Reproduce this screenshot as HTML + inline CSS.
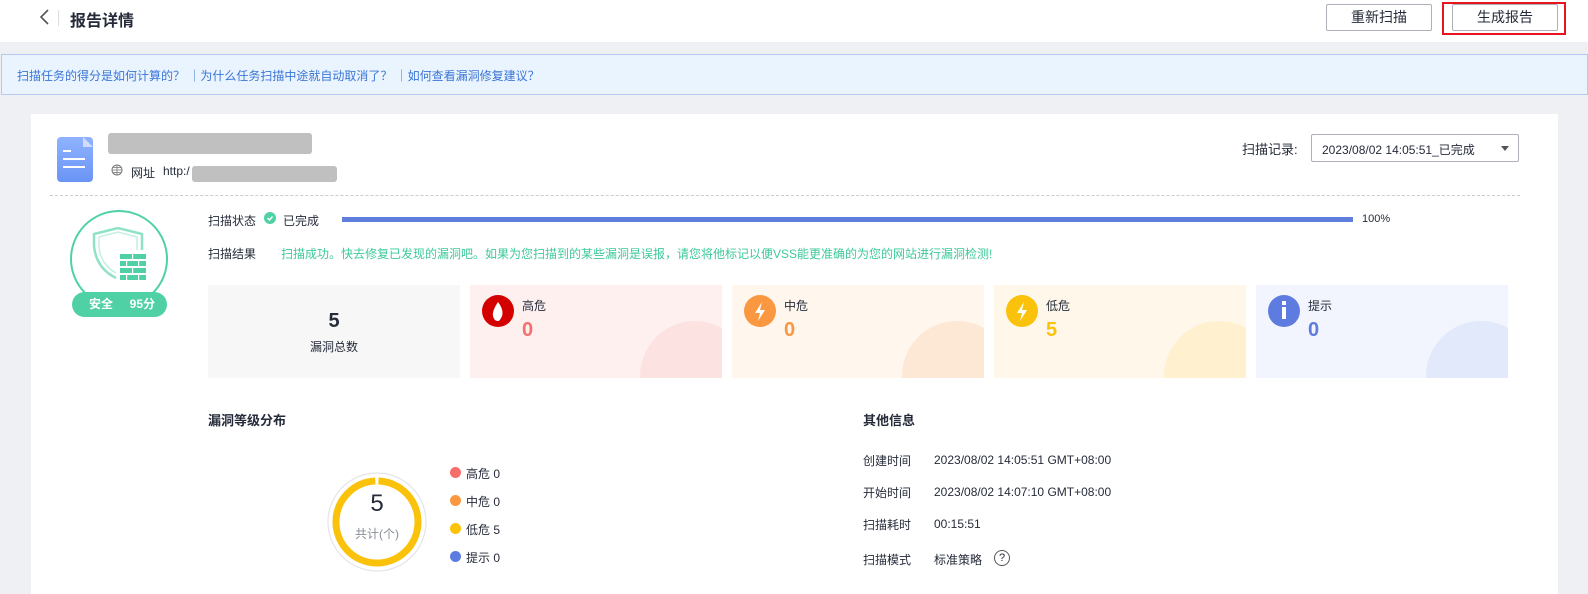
<!DOCTYPE html>
<html><head><meta charset="utf-8"><style>
*{margin:0;padding:0;box-sizing:border-box}
body{width:1588px;height:589px;overflow:hidden;background:#eff0f4;font-family:"Liberation Sans","Noto Sans CJK SC",sans-serif;font-size:12px;color:#252b3a;position:relative}
.a{position:absolute;white-space:nowrap}
.top{position:absolute;left:0;top:0;width:1588px;height:42px;background:#fff}
.btn{position:absolute;top:4px;height:27px;width:106px;border:1px solid #adb0b8;border-radius:2px;background:#fff;font-size:14px;text-align:center;line-height:25px}
.card{position:absolute;left:31px;top:114px;width:1527px;height:480px;background:#fff}
.stat{position:absolute;top:285px;width:252px;height:93px;overflow:hidden}
.ic{position:absolute;left:12px;top:10px;width:32px;height:32px;border-radius:50%}
.lb{position:absolute;left:52px;top:12px;font-size:12px}
.nm{position:absolute;left:52px;top:34px;font-size:20px;font-weight:bold}
.bg{position:absolute;left:170px;top:36px;width:110px;height:110px;border-radius:50%}
.dot{position:absolute;width:11px;height:11px;border-radius:50%}
</style></head><body>
<div class="top"></div>
<svg class="a" style="left:38px;top:8px" width="14" height="18"><path d="M10 2 L3 9 L10 16" stroke="#555" stroke-width="1.6" fill="none"/></svg>
<div class="a" style="left:58px;top:10px;width:1px;height:16px;background:#ddd"></div>
<div class="a" style="left:70px;top:7px;font-size:16px;font-weight:bold">报告详情</div>
<div class="btn" style="left:1326px">重新扫描</div>
<div class="a" style="left:1442px;top:2px;width:124px;height:33px;border:2px solid #e8141e"></div>
<div class="btn" style="left:1452px">生成报告</div>

<div class="a" style="left:1px;top:54px;width:1587px;height:41px;background:#eaf4fe;border:1px solid #b6c8f0"></div>
<div class="a" style="left:17px;top:67px;color:#3a75d6;font-size:12px">扫描任务的得分是如何计算的？ ｜为什么任务扫描中途就自动取消了？ ｜如何查看漏洞修复建议？</div>

<div class="card"></div>
<div class="a" style="left:57px;top:137px;width:36px;height:45px;border-radius:4px;background:linear-gradient(#8fb3ff,#6a94f5)"></div>
<div class="a" style="left:83px;top:137px;width:10px;height:10px;background:#cfdcff;clip-path:polygon(0 0,100% 100%,0 100%)"></div>
<div class="a" style="left:63px;top:150px;width:8px;height:2px;background:#fff"></div>
<div class="a" style="left:63px;top:158px;width:22px;height:2px;background:#fff"></div>
<div class="a" style="left:63px;top:166px;width:22px;height:2px;background:#fff"></div>
<div class="a" style="left:108px;top:133px;width:204px;height:21px;background:#c0c0c0;border-radius:3px"></div>
<svg class="a" style="left:111px;top:164px" width="13" height="13"><circle cx="6" cy="6" r="5" fill="none" stroke="#777"/><path d="M1 6 H11 M6 1 V11 M2 3.5 H10 M2 8.5 H10" stroke="#777" stroke-width="0.8"/></svg>
<div class="a" style="left:131px;top:164px">网址</div>
<div class="a" style="left:163px;top:164px">http:/</div>
<div class="a" style="left:192px;top:166px;width:145px;height:16px;background:#c0c0c0;border-radius:3px"></div>
<div class="a" style="left:50px;top:195px;width:1470px;border-top:1px dashed #ccc"></div>

<div class="a" style="left:1242px;top:139px;font-size:13px">扫描记录:</div>
<div class="a" style="left:1311px;top:134px;width:208px;height:28px;border:1px solid #adb0b8;border-radius:2px"></div>
<div class="a" style="left:1322px;top:141px">2023/08/02 14:05:51_已完成</div>
<div class="a" style="left:1501px;top:146px;width:0;height:0;border-left:4px solid transparent;border-right:4px solid transparent;border-top:5px solid #555"></div>

<div class="a" style="left:70px;top:210px;width:98px;height:98px;border:2px solid #4fd1a5;border-radius:50%"></div>
<svg class="a" style="left:90px;top:226px" width="64" height="62"><path d="M26 52 Q6 42 4 20 L4 8 L28 2 L52 8 L52 24" stroke="#8fe3c5" stroke-width="2.5" fill="none"/><path d="M26 47 Q10 38 9 20 L9 11 L28 6 L47 11 L47 24" stroke="#c4f0df" stroke-width="1.5" fill="none"/><g fill="#4fd1a5"><rect x="30" y="28" width="26" height="5"/><rect x="30" y="35" width="26" height="5"/><rect x="30" y="42" width="26" height="5"/><rect x="30" y="49" width="26" height="5"/></g><g fill="#fff"><rect x="42" y="28" width="1.2" height="5"/><rect x="36" y="35" width="1.2" height="5"/><rect x="48" y="35" width="1.2" height="5"/><rect x="42" y="42" width="1.2" height="5"/><rect x="36" y="49" width="1.2" height="5"/><rect x="48" y="49" width="1.2" height="5"/></g></svg>
<div class="a" style="left:72px;top:292px;width:95px;height:25px;background:#4fd1a5;border-radius:13px;color:#fff;font-weight:bold;font-size:12px;line-height:25px;padding-left:17px">安全&nbsp;&nbsp;&nbsp;&nbsp;&nbsp;95分</div>

<div class="a" style="left:208px;top:212px">扫描状态</div>
<div class="a" style="left:264px;top:212px;width:12px;height:12px;border-radius:50%;background:#4fd1a5"></div>
<svg class="a" style="left:264px;top:212px" width="12" height="12"><path d="M3.5 6 L5.5 8 L8.5 4.5" stroke="#fff" stroke-width="1.4" fill="none"/></svg>
<div class="a" style="left:283px;top:212px">已完成</div>
<div class="a" style="left:342px;top:217px;width:1011px;height:5px;background:#5e7fdc"></div>
<div class="a" style="left:1362px;top:213px;font-size:11px">100%</div>
<div class="a" style="left:208px;top:245px">扫描结果</div>
<div class="a" style="left:281px;top:245px;color:#3ec99a">扫描成功。快去修复已发现的漏洞吧。如果为您扫描到的某些漏洞是误报，请您将他标记以便VSS能更准确的为您的网站进行漏洞检测!</div>

<div class="stat" style="left:208px;background:#f7f7f7"><div class="a" style="left:0;width:252px;top:25px;text-align:center;font-size:20px;font-weight:bold">5</div><div class="a" style="left:0;width:252px;top:53px;text-align:center">漏洞总数</div></div>
<div class="stat" style="left:470px;background:#fff0f0"><div class="bg" style="background:#fde2e2"></div><div class="ic" style="background:#d40000"></div><svg class="a" style="left:20px;top:16px" width="16" height="22"><path d="M8 1 Q14 9 12 15 Q10 20 8 20 Q4 20 3 15 Q2 10 8 1Z" fill="#fff"/></svg><div class="lb">高危</div><div class="nm" style="color:#f66f6a">0</div></div>
<div class="stat" style="left:732px;background:#fff6ee"><div class="bg" style="background:#fde8d6"></div><div class="ic" style="background:#fa9841"></div><svg class="a" style="left:20px;top:16px" width="16" height="22"><path d="M10 1 L3 12 L8 12 L6 20 L13 9 L8 9Z" fill="#fff"/></svg><div class="lb">中危</div><div class="nm" style="color:#fa9841">0</div></div>
<div class="stat" style="left:994px;background:#fff8ea"><div class="bg" style="background:#fff0cf"></div><div class="ic" style="background:#fac20a"></div><svg class="a" style="left:20px;top:16px" width="16" height="22"><path d="M10 1 L3 12 L8 12 L6 20 L13 9 L8 9Z" fill="#fff"/></svg><div class="lb">低危</div><div class="nm" style="color:#fac20a">5</div></div>
<div class="stat" style="left:1256px;background:#f2f5fd"><div class="bg" style="background:#e2e9fb"></div><div class="ic" style="background:#5e7ce0"></div><div class="a" style="left:26px;top:16px;width:4px;height:4px;background:#fff"></div><div class="a" style="left:26px;top:22px;width:4px;height:12px;background:#fff"></div><div class="lb">提示</div><div class="nm" style="color:#5e7ce0">0</div></div>

<div class="a" style="left:208px;top:410px;font-size:13px;font-weight:bold">漏洞等级分布</div>
<div class="a" style="left:863px;top:410px;font-size:13px;font-weight:bold">其他信息</div>

<svg class="a" style="left:322px;top:467px" width="110" height="110"><circle cx="55" cy="55" r="49" fill="none" stroke="#e4e4ea" stroke-width="1.2"/><circle cx="55" cy="55" r="41" fill="none" stroke="#fac20a" stroke-width="7" stroke-dasharray="254 4" transform="rotate(-88 55 55)"/></svg>
<div class="a" style="left:322px;width:110px;top:490px;text-align:center;font-size:24px">5</div>
<div class="a" style="left:322px;width:110px;top:525px;text-align:center;color:#8a8e99">共计(个)</div>
<div class="dot" style="left:450px;top:467px;background:#f66f6a"></div><div class="a" style="left:466px;top:465px">高危 0</div>
<div class="dot" style="left:450px;top:495px;background:#fa9841"></div><div class="a" style="left:466px;top:493px">中危 0</div>
<div class="dot" style="left:450px;top:523px;background:#fac20a"></div><div class="a" style="left:466px;top:521px">低危 5</div>
<div class="dot" style="left:450px;top:551px;background:#5e7ce0"></div><div class="a" style="left:466px;top:549px">提示 0</div>

<div class="a" style="left:863px;top:452px">创建时间</div><div class="a" style="left:934px;top:453px">2023/08/02 14:05:51 GMT+08:00</div>
<div class="a" style="left:863px;top:484px">开始时间</div><div class="a" style="left:934px;top:485px">2023/08/02 14:07:10 GMT+08:00</div>
<div class="a" style="left:863px;top:516px">扫描耗时</div><div class="a" style="left:934px;top:517px">00:15:51</div>
<div class="a" style="left:863px;top:551px">扫描模式</div><div class="a" style="left:934px;top:551px">标准策略</div>
<div class="a" style="left:994px;top:550px;width:16px;height:16px;border:1px solid #555;border-radius:50%;text-align:center;font-size:11px;line-height:14px">?</div>
</body></html>
